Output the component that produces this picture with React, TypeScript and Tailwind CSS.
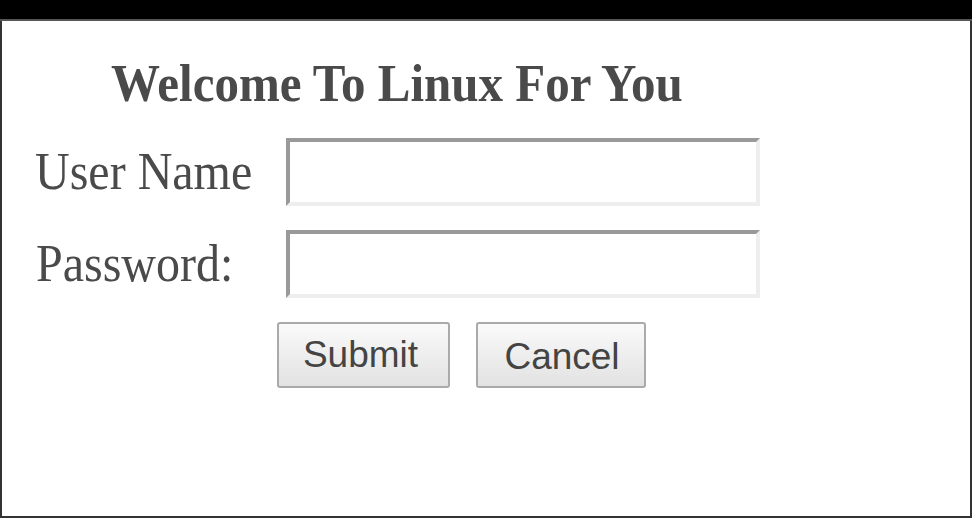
export default function App() {
  const serif = { fontFamily: '"Liberation Serif", "Times New Roman", serif' };
  const sans = { fontFamily: '"Liberation Sans", Arial, sans-serif' };
  return (
    <div className="w-[972px] h-[518px] bg-white flex flex-col overflow-hidden">
      <div className="h-[19px] bg-black border-b-2 border-[#555] shrink-0 box-content" />
      <div className="flex-1 border-x-2 border-b-2 border-[#333] flex flex-col">
        <h1
          className="text-[49px] font-bold text-[#4a4a4a] leading-none pl-[109px] mt-[38px] origin-center scale-y-[1.08]"
          style={serif}
        >
          Welcome To Linux For You
        </h1>
        <div className="flex items-center mt-[30px]">
          <label
            className="w-[284px] pl-[33px] text-[48px] text-[#4a4a4a] leading-none origin-center scale-y-[1.1] -translate-y-[1px]"
            style={serif}
          >
            User Name
          </label>
          <div className="w-[474px] h-[68px] border-4 border-t-[#999] border-l-[#999] border-r-[#eee] border-b-[#eee] bg-white" />
        </div>
        <div className="flex items-center mt-[24px]">
          <label
            className="w-[284px] pl-[34px] text-[48px] text-[#4a4a4a] leading-none origin-center scale-y-[1.1] -translate-y-[1px]"
            style={serif}
          >
            Password:
          </label>
          <div className="w-[474px] h-[68px] border-4 border-t-[#999] border-l-[#999] border-r-[#eee] border-b-[#eee] bg-white" />
        </div>
        <div className="flex gap-[26px] pl-[275px] mt-[24px]">
          <button
            className="w-[173px] h-[66px] border-2 border-[#aaa] rounded-[3px] bg-gradient-to-b from-[#fafafa] to-[#e2e2e2] text-[37px] text-[#444] leading-none pb-[2px] pr-[6px]"
            style={sans}
          >
            Submit
          </button>
          <button
            className="w-[170px] h-[66px] border-2 border-[#aaa] rounded-[3px] bg-gradient-to-b from-[#fafafa] to-[#e2e2e2] text-[37px] text-[#444] leading-none pt-[2px] pl-[2px]"
            style={sans}
          >
            Cancel
          </button>
        </div>
      </div>
    </div>
  );
}
